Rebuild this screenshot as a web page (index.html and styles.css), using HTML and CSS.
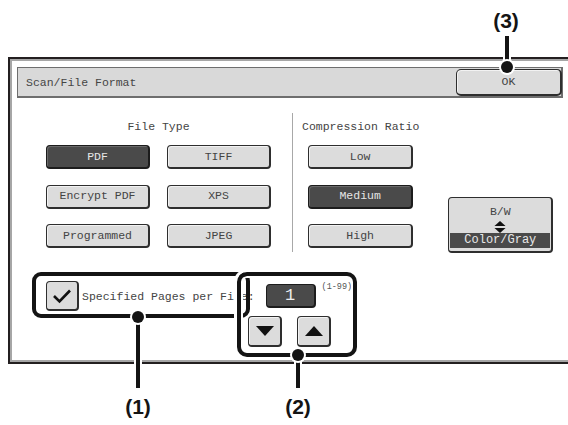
FILE: index.html
```html
<!DOCTYPE html>
<html>
<head>
<meta charset="utf-8">
<link rel="stylesheet" href="styles.css">
</head>
<body>
<div class="stage">
  <div class="panel">
    <div class="titlebar">
      <span class="title">Scan/File Format</span>
      <div class="btn ok">OK</div>
    </div>
    <div class="settings">
      <div class="group filetype">
        <div class="label">File Type</div>
        <div class="grid2">
          <div class="btn sel">PDF</div>
          <div class="btn">TIFF</div>
          <div class="btn">Encrypt PDF</div>
          <div class="btn">XPS</div>
          <div class="btn">Programmed</div>
          <div class="btn">JPEG</div>
        </div>
      </div>
      <div class="group compression">
        <div class="label">Compression Ratio</div>
        <div class="col">
          <div class="btn">Low</div>
          <div class="btn sel">Medium</div>
          <div class="btn">High</div>
        </div>
      </div>
      <div class="colormode">
        <div class="cm-top">B/W</div>
        <svg class="cm-arrows" width="12" height="13" viewBox="0 0 12 13"><polygon points="0,5.5 6,0 12,5.5" fill="#111"/><polygon points="0,7.5 6,13 12,7.5" fill="#111"/></svg>
        <div class="cm-band">Color/Gray</div>
      </div>
    </div>
    <div class="pages">
      <div class="check-row">
        <div class="checkbox"><svg width="20" height="16" viewBox="0 0 20 16"><polyline points="2,8 7.5,13.5 18,2.5" fill="none" stroke="#111" stroke-width="2.6"/></svg></div>
        <span class="pages-label">Specified Pages per File:</span>
        <div class="numfield">1</div>
        <span class="range">(1-99)</span>
      </div>
      <div class="arrows">
        <div class="arrowbtn"><svg width="18" height="10" viewBox="0 0 18 10"><polygon points="0,0 18,0 9,10" fill="#111"/></svg></div>
        <div class="arrowbtn"><svg width="18" height="10" viewBox="0 0 18 10"><polygon points="0,10 18,10 9,0" fill="#111"/></svg></div>
      </div>
    </div>
  </div>

  <div class="cbox cbox1"></div>
  <div class="cbox cbox2"></div>
  <div class="cline cline1"></div>
  <div class="cline cline2"></div>
  <div class="cline cline3"></div>
  <div class="cdot cdot1"></div>
  <div class="cdot cdot2"></div>
  <div class="cdot cdot3"></div>
  <div class="clabel clabel1">(1)</div>
  <div class="clabel clabel2">(2)</div>
  <div class="clabel clabel3">(3)</div>
</div>
</body>
</html>
```

FILE: styles.css
```css
html, body {
  margin: 0;
  padding: 0;
  background: #fff;
}
body {
  width: 568px;
  height: 425px;
  overflow: hidden;
  font-family: "Liberation Mono", "DejaVu Sans Mono", monospace;
  font-size: 11.5px;
  color: #444;
}
.stage {
  position: relative;
  width: 568px;
  height: 425px;
  padding: 57px 0 0 8px;
  box-sizing: border-box;
}
.panel {
  width: 560px;
  height: 307px;
  box-sizing: border-box;
  border: 2px solid #231f20;
  border-right: 0;
  box-shadow: inset 2px 2px 0 #a6a6a6, inset 0 -2px 0 #a6a6a6;
  background: #fff;
}
.titlebar {
  margin: 8px 0 0 7px;
  width: 546px;
  height: 31px;
  box-sizing: border-box;
  border: 1px solid #6e6e6e;
  border-right-width: 2px;
  border-bottom-width: 2px;
  background: #d9d9d9;
  display: flex;
  align-items: center;
  justify-content: space-between;
  padding-left: 8px;
}
.title {
  color: #454545;
}
.btn {
  box-sizing: border-box;
  height: 24px;
  border: 1px solid #2e2e2e;
  border-right-width: 2px;
  border-bottom-width: 2px;
  border-radius: 4px;
  background: #dcdcdc;
  box-shadow: inset 1px 1px 0 #f2f2f2;
  display: flex;
  align-items: center;
  justify-content: center;
  color: #444;
  line-height: 1;
}
.btn.sel {
  background: #4a4a4a;
  color: #e6e6e6;
  border-color: #1c1c1c;
  box-shadow: inset 1px 1px 0 #6a6a6a;
}
.btn.ok {
  width: 106px;
  height: 27px;
  border-radius: 5px;
  margin-right: -1px;
}
.settings {
  display: flex;
  align-items: flex-start;
  margin-top: 15px;
  padding-left: 36px;
}
.group {
  padding-top: 7px;
}
.label {
  height: 14px;
  line-height: 14px;
  text-align: center;
  margin-bottom: 11px;
  color: #444;
  white-space: nowrap;
}
.filetype {
  width: 225px;
}
.grid2 {
  display: grid;
  grid-template-columns: 104px 104px;
  column-gap: 17px;
  row-gap: 15.5px;
}
.compression {
  margin-left: 21px;
  border-left: 1px solid #a8a8a8;
  padding: 7px 0 4px 9px;
}
.col {
  display: flex;
  flex-direction: column;
  align-items: center;
  row-gap: 15.5px;
}
.col .btn {
  width: 105px;
}
.colormode {
  margin-left: 29px;
  margin-top: 84px;
  width: 105px;
  height: 56px;
  box-sizing: border-box;
  border: 1px solid #2e2e2e;
  border-right-width: 2px;
  border-bottom-width: 2px;
  border-radius: 4px;
  background: #dcdcdc;
  display: flex;
  flex-direction: column;
  align-items: center;
  padding: 7px 1px 3px 1px;
}
.cm-top {
  line-height: 14px;
  height: 14px;
}
.cm-arrows {
  display: block;
  margin-top: 2px;
}
.cm-band {
  margin-top: auto;
  align-self: stretch;
  height: 15px;
  line-height: 15px;
  background: #4a4a4a;
  color: #e8e8e8;
  text-align: center;
  font-size: 12px;
}
.pages {
  margin-top: 28px;
  padding-left: 36px;
}
.check-row {
  display: flex;
  align-items: center;
  height: 30px;
}
.checkbox {
  width: 33px;
  height: 30px;
  box-sizing: border-box;
  border: 1px solid #2e2e2e;
  border-right-width: 2px;
  border-bottom-width: 2px;
  border-radius: 4px;
  background: #dcdcdc;
  display: flex;
  align-items: center;
  justify-content: center;
}
.pages-label {
  margin-left: 3px;
  white-space: nowrap;
}
.numfield {
  margin-left: 11px;
  width: 50px;
  height: 24px;
  box-sizing: border-box;
  border: 1px solid #1c1c1c;
  border-right-width: 2px;
  border-bottom-width: 2px;
  border-radius: 4px;
  background: #4a4a4a;
  color: #ececec;
  font-size: 17px;
  display: flex;
  align-items: center;
  justify-content: center;
}
.range {
  align-self: flex-start;
  margin: 1px 0 0 6px;
  font-size: 8.5px;
  line-height: 10px;
  color: #555;
}
.arrows {
  display: flex;
  column-gap: 15px;
  margin: 5px 0 0 202px;
}
.arrowbtn {
  width: 34px;
  height: 31px;
  box-sizing: border-box;
  border: 1px solid #2e2e2e;
  border-right-width: 2px;
  border-bottom-width: 2px;
  border-radius: 4px;
  background: #dcdcdc;
  box-shadow: inset 1px 1px 0 #f2f2f2;
  display: flex;
  align-items: center;
  justify-content: center;
}

/* callouts */
.cbox {
  position: absolute;
  box-sizing: border-box;
  border: 4px solid #141414;
}
.cbox1 {
  left: 32px;
  top: 272px;
  width: 218px;
  height: 46px;
  border-radius: 9px;
}
.cbox2 {
  left: 237px;
  top: 272px;
  width: 120px;
  height: 85px;
  border-radius: 10px;
  box-shadow: 0 0 0 3px #fff, inset 0 0 0 2px #fff;
}
.cline {
  position: absolute;
  width: 4px;
  background: #141414;
  box-shadow: 0 0 0 2px #fff;
}
.cline1 { left: 136px; top: 318px; height: 70px; }
.cline2 { left: 296px; top: 356px; height: 32px; }
.cline3 { left: 505px; top: 36px; height: 30px; }
.cdot {
  position: absolute;
  width: 12px;
  height: 12px;
  border-radius: 50%;
  background: #141414;
  box-shadow: 0 0 0 2px #fff;
}
.cdot1 { left: 132px; top: 311px; }
.cdot2 { left: 292px; top: 349px; }
.cdot3 { left: 501px; top: 61px; }
.clabel {
  position: absolute;
  width: 40px;
  text-align: center;
  font-family: "Liberation Sans", Arial, sans-serif;
  font-weight: bold;
  font-size: 21px;
  line-height: 24px;
  color: #141414;
}
.clabel1 { left: 118px; top: 395px; }
.clabel2 { left: 278px; top: 395px; }
.clabel3 { left: 486px; top: 9px; }
```
